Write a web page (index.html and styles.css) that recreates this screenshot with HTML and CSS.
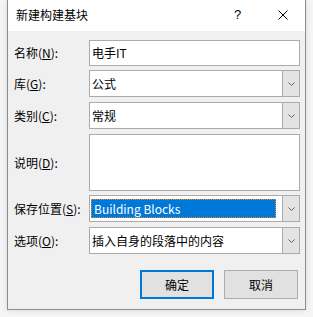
FILE: index.html
```html
<!DOCTYPE html>
<html lang="zh-CN">
<head>
<meta charset="utf-8">
<title>新建构建基块</title>
<link rel="stylesheet" href="styles.css">
</head>
<body>
<div class="window">
  <div class="titlebar">
    <span class="title">新建构建基块</span>
    <span class="help">?</span>
    <span class="close"><svg width="10" height="10" viewBox="0 0 10 10"><path d="M0.5 0.5 L9.5 9.5 M9.5 0.5 L0.5 9.5" stroke="#000" stroke-width="1" fill="none"/></svg></span>
  </div>
  <div class="content">
    <div class="row r-name">
      <span class="label">名称(<u>N</u>):</span>
      <div class="field textbox">电手IT</div>
    </div>
    <div class="row r-gap4">
      <span class="label">库(<u>G</u>):</span>
      <div class="field combo"><span class="value">公式</span><span class="drop"><svg width="7" height="4" viewBox="0 0 7 4"><path d="M0.5 0.5 L3.5 3.5 L6.5 0.5" stroke="#606060" fill="none"/></svg></span></div>
    </div>
    <div class="row r-gap5">
      <span class="label">类别(<u>C</u>):</span>
      <div class="field combo"><span class="value">常规</span><span class="drop"><svg width="7" height="4" viewBox="0 0 7 4"><path d="M0.5 0.5 L3.5 3.5 L6.5 0.5" stroke="#606060" fill="none"/></svg></span></div>
    </div>
    <div class="row r-gap5">
      <span class="label">说明(<u>D</u>):</span>
      <div class="field textarea"></div>
    </div>
    <div class="row r-gap4">
      <span class="label">保存位置(<u>S</u>):</span>
      <div class="field combo"><span class="value"><span class="selected">Building Blocks</span></span><span class="drop"><svg width="7" height="4" viewBox="0 0 7 4"><path d="M0.5 0.5 L3.5 3.5 L6.5 0.5" stroke="#606060" fill="none"/></svg></span></div>
    </div>
    <div class="row r-gap5">
      <span class="label">选项(<u>O</u>):</span>
      <div class="field combo"><span class="value">插入自身的段落中的内容</span><span class="drop"><svg width="7" height="4" viewBox="0 0 7 4"><path d="M0.5 0.5 L3.5 3.5 L6.5 0.5" stroke="#606060" fill="none"/></svg></span></div>
    </div>
    <div class="buttons">
      <button class="btn btn-default">确定</button>
      <button class="btn">取消</button>
    </div>
  </div>
</div>
</body>
</html>
```

FILE: styles.css
```css
html, body {
  margin: 0;
  padding: 0;
}
body {
  background: #f5f5f5;
  font-family: "Noto Sans CJK SC", "Noto Sans", sans-serif;
  font-size: 12px;
  color: #000;
  width: 313px;
  height: 317px;
  overflow: hidden;
}
.window {
  margin-left: 7px;
  width: 297px;
  height: 309px;
  border: 1px solid #8c8c8c;
  border-top: none;
  background: #f0f0f0;
  box-shadow: 0 0 6px rgba(0, 0, 0, 0.12);
  display: flex;
  flex-direction: column;
}
.titlebar {
  height: 31px;
  background: #fff;
  display: flex;
  align-items: center;
  flex-shrink: 0;
}
.title {
  margin-left: 8px;
  line-height: 14px;
  font-size: 12px;
  flex: 1;
  padding-bottom: 2px;
}
.help {
  font-family: "Liberation Sans", sans-serif;
  font-size: 13px;
  line-height: 12px;
  width: 6px;
  margin-right: 38px;
  padding-bottom: 2px;
}
.close {
  display: flex;
  width: 10px;
  height: 10px;
  margin-right: 17px;
  margin-bottom: 1px;
}
.content {
  padding: 9px 5px 10px 6px;
  display: flex;
  flex-direction: column;
}
.row {
  display: flex;
  align-items: center;
}
.r-name .field { height: 26px; }
.r-gap4 { margin-top: 4px; }
.r-gap5 { margin-top: 5px; }
.label {
  width: 75px;
  flex-shrink: 0;
  line-height: 16px;
  white-space: nowrap;
}
.label u {
  text-underline-offset: 1px;
}
.field {
  box-sizing: border-box;
  width: 211px;
  height: 27px;
  border: 1px solid #ababab;
  background: #fff;
}
.textbox {
  display: flex;
  align-items: center;
  padding-left: 2px;
  line-height: 16px;
}
.textarea {
  height: 57px;
}
.combo {
  display: flex;
}
.value {
  flex: 1;
  display: flex;
  align-items: center;
  padding-left: 2px;
  line-height: 16px;
  white-space: nowrap;
}
.selected {
  display: block;
  margin-left: -1px;
  width: 185px;
  height: 19px;
  box-sizing: border-box;
  background: #0078d7;
  color: #fff;
  border: 1px dotted #f08a24;
  padding-left: 2px;
  line-height: 17px;
}
.drop {
  width: 16px;
  flex-shrink: 0;
  background: #e3e3e3;
  border-left: 1px solid #ababab;
  display: flex;
  align-items: center;
  justify-content: center;
  padding-top: 1px;
}
.buttons {
  display: flex;
  justify-content: flex-end;
  gap: 10px;
  margin-top: 16px;
  padding-right: 2px;
}
.btn {
  box-sizing: border-box;
  width: 74px;
  height: 29px;
  margin: 0;
  padding: 0;
  background: #e1e1e1;
  border: 1px solid #adadad;
  font-family: "Noto Sans CJK SC", "Noto Sans", sans-serif;
  font-size: 12px;
  line-height: 16px;
  color: #000;
}
.btn-default {
  border: 2px solid #0078d7;
}
```
